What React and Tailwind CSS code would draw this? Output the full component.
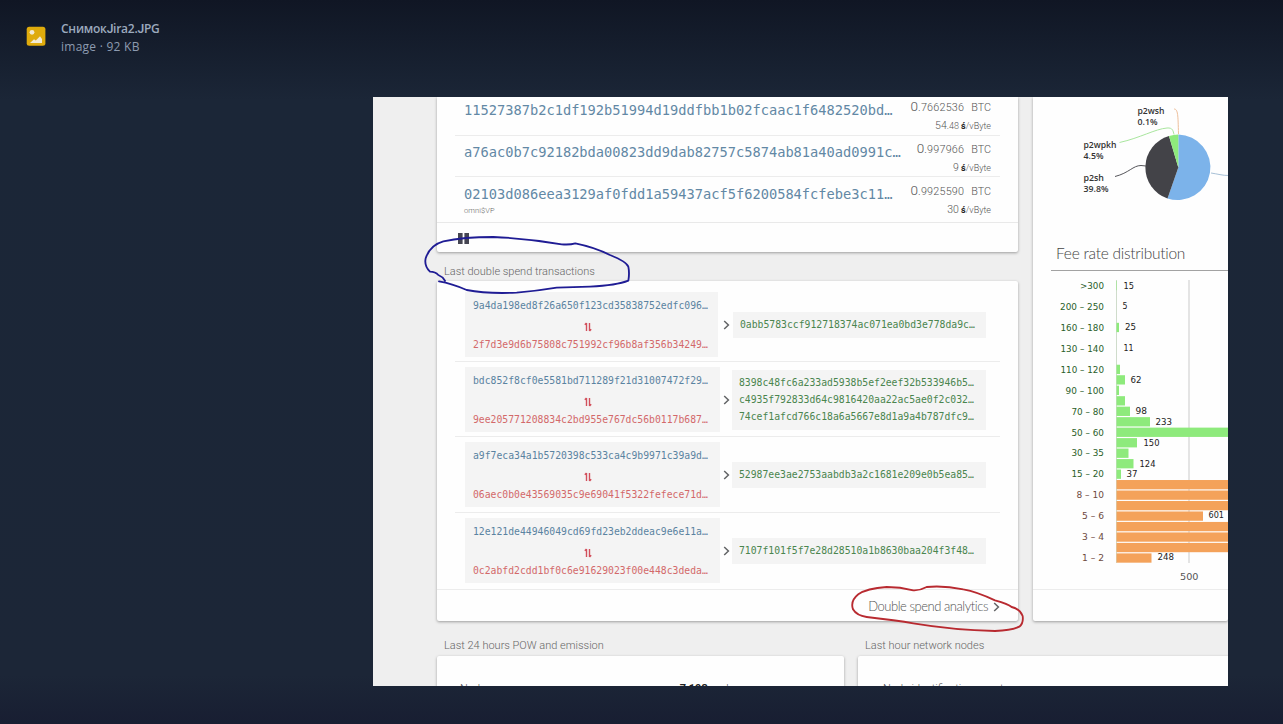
import React from "react";

const latest = [
  { hash: "11527387b2c1df192b51994d19ddfbb1b02fcaac1f6482520bd…", amount: ".7662536", fee: "54", cents: ".48", h: "h-[39px] pt-[4px]", line: "border-[#ececec]" },
  { hash: "a76ac0b7c92182bda00823dd9dab82757c5874ab81a40ad0991c…", amount: ".997966", fee: "9", cents: "", h: "h-[41px] pt-[7px]", line: "border-[#ececec]" },
  { hash: "02103d086eea3129af0fdd1a59437acf5f6200584fcfebe3c11…", note: "omni$VP", amount: ".9925590", fee: "30", cents: "", h: "h-[45px] pt-[8px]", line: "border-transparent" },
];

const doubles = [
  { a: "9a4da198ed8f26a650f123cd35838752edfc096…", b: "2f7d3e9d6b75808c751992cf96b8af356b34249…", out: ["0abb5783ccf912718374ac071ea0bd3e778da9c…"], row: "h-[81px] pt-[11px]", box: "w-[253px]", swap: "pr-[7px]", gap: "w-[15px] pl-[2px]", oh: "h-[26px]", ow: "w-[253px] pl-[7px]", line: "border-[#ececec]" },
  { a: "bdc852f8cf0e5581bd711289f21d31007472f29…", b: "9ee205771208834c2bd955e767dc56b0117b687…", out: ["8398c48fc6a233ad5938b5ef2eef32b533946b5…", "c4935f792833d64c9816420aa22ac5ae0f2c032…", "74cef1afcd766c18a6a5667e8d1a9a4b787dfc9…"], row: "h-[75px] pt-[5px]", box: "w-[255px]", swap: "pr-[9px]", gap: "w-[12px]", oh: "h-[60px]", ow: "w-[254px] pl-[7px]", line: "border-[#ececec]" },
  { a: "a9f7eca34a1b5720398c533ca4c9b9971c39a9d…", b: "06aec0b0e43569035c9e69041f5322fefece71d…", out: ["52987ee3ae2753aabdb3a2c1681e209e0b5ea85…"], row: "h-[76px] pt-[5px]", box: "w-[255px]", swap: "pr-[9px]", gap: "w-[12px]", oh: "h-[26px]", ow: "w-[254px] pl-[7px]", line: "border-[#ececec]" },
  { a: "12e121de44946049cd69fd23eb2ddeac9e6e11a…", b: "0c2abfd2cdd1bf0c6e91629023f00e448c3deda…", out: ["7107f101f5f7e28d28510a1b8630baa204f3f48…"], row: "h-[76px] pt-[5px]", box: "w-[255px]", swap: "pr-[9px]", gap: "w-[12px]", oh: "h-[26px]", ow: "w-[254px] pl-[7px]", line: "border-transparent" },
];

const GREEN = "#8eea7c";
const ORANGE = "#f4a25a";
// One entry per bar: right edge, value label, label x, label width
const bars = [
  [1117, "15", 1123.5, 10.5], [1116], [1116, "5", 1122.5, 5], [1116], [1119, "25", 1125, 11], [1116],
  [1116, "11", 1123.5, 10], [1116], [1120], [1125, "62", 1130.5, 11], [1119], [1125],
  [1130, "98", 1135.5, 11.5], [1150, "233", 1155.5, 16.5], [1240], [1137, "150", 1143.5, 16], [1128.5],
  [1133.5, "124", 1139.5, 16], [1121, "37", 1126.5, 11], [1240], [1240], [1240],
  [1203, "601", 1208.5, 15.5], [1240], [1240], [1240], [1151.5, "248", 1157.5, 16.5],
];
const ticks = [
  [">300", 1080], ["200 – 250", 1060], ["160 – 180", 1060.5], ["130 – 140", 1060.5], ["110 – 120", 1060.5],
  ["90 – 100", 1065.5], ["70 – 80", 1071.5], ["50 – 60", 1071.5], ["30 – 35", 1071.5], ["15 – 20", 1071.5],
  ["8 – 10", 1076.5], ["5 – 6", 1082], ["3 – 4", 1082], ["1 – 2", 1082],
];

const MONO = "font-['DejaVu_Sans_Mono',monospace] whitespace-nowrap";

function Chevron() {
  return (
    <svg width="7" height="10" viewBox="0 0 7 10" className="shrink-0">
      <path d="M1.2 1 L5.4 5 L1.2 9" fill="none" stroke="#626466" strokeWidth="1.5" />
    </svg>
  );
}

function Swap() {
  return (
    <svg width="8" height="10" viewBox="0 0 8 10">
      <path d="M2.5 9 V1 M0.8 2.8 L2.5 1 M5.5 1 V9 M7.2 7.2 L5.5 9" fill="none" stroke="#d2505c" strokeWidth="1.4" />
    </svg>
  );
}

function Card({ className, children }) {
  return <div className={`rounded-[2px] bg-[#fefefe] shadow-[0_1px_3px_rgba(0,0,0,0.35)] ${className}`}>{children}</div>;
}

function Latest() {
  return (
    <Card className="h-[155px] w-[581px] rounded-t-none">
      {latest.map((t) => (
        <div key={t.hash} className={`mr-[18px] ml-[18px] flex justify-between border-b pr-[9px] pl-[9px] ${t.h} ${t.line}`}>
          <div>
            <div className={`${MONO} text-[13.7px] leading-[19px] text-[#6288a5]`}>{t.hash}</div>
            {t.note && <div className="font-[Roboto,sans-serif] text-[7.5px] leading-[13px] font-light tracking-[0.1px] text-[#666]">{t.note}</div>}
          </div>
          <div className="-mt-[3px] text-right font-[Roboto,sans-serif] font-light whitespace-nowrap text-[#555]">
            <div className="text-[10.8px] leading-[16px]">
              <span className="text-[13.5px]">0</span>
              <span className="tracking-[0.2px]">{t.amount}</span>
              <span className="ml-[7px]">BTC</span>
            </div>
            <div className="mt-[2px] text-[9px] leading-[15px]">
              <span className="text-[10.5px]">{t.fee}</span>
              <span className="text-[9px]">{t.cents}</span> <span className="font-bold text-[#222]">ś</span>/vByte
            </div>
          </div>
        </div>
      ))}
      <div className="h-[30px] border-t border-[#e9e9e9] pt-[10px] pl-[21px]">
        <svg width="11" height="11" viewBox="0 0 11 11">
          <path d="M0 0h4.6v11H0z M6.4 0H11v11H6.4z" fill="#454552" />
        </svg>
      </div>
    </Card>
  );
}

function DoubleSpends() {
  return (
    <Card className="h-[340px] w-[581px]">
      {doubles.map((d) => (
        <div key={d.a} className={`mr-[18px] ml-[18px] flex items-start border-b pl-[10px] ${d.row} ${d.line}`}>
          <div className={`flex h-[65px] flex-col justify-between bg-[#f4f4f4] pt-[6px] pb-[5px] pl-[8px] ${d.box} ${MONO} text-[9.75px] leading-[15px]`}>
            <div className="text-[#5a83a1]">{d.a}</div>
            <div className={`flex h-[10px] justify-center ${d.swap}`}><span className="mt-[2px] -ml-[8px] block"><Swap /></span></div>
            <div className="text-[#d3696a]">{d.b}</div>
          </div>
          <div className="flex h-[65px] items-center">
            <div className={`flex justify-center ${d.gap}`}><Chevron /></div>
            <div className={`flex flex-col justify-center bg-[#f4f4f4] ${d.oh} ${d.ow} ${MONO} text-[9.75px] leading-[17px] text-[#4a854e]`}>
              {d.out.map((o) => <div key={o}>{o}</div>)}
            </div>
          </div>
        </div>
      ))}
      <div className="flex h-[32px] items-center justify-end border-t border-[#ececec] pt-[2px] pr-[18px]">
        <span className="mr-[5px] font-[Lato,sans-serif] text-[13px] font-light tracking-[-0.46px] text-[#555]">Double spend analytics</span>
        <Chevron />
      </div>
    </Card>
  );
}

function Pie() {
  return (
    <svg width="195" height="140" viewBox="1033 97 195 140" fontFamily="'Open Sans', sans-serif" fontSize="9" fontWeight="600" fill="#333">
      <path d="M1178.3 167.5 L1178.3 134.5 A32.8 32.8 0 1 1 1167.5 198.5 Z" fill="#7cb3ea" />
      <path d="M1178.3 167.5 L1167.5 198.5 A32.8 32.8 0 0 1 1169 136 Z" fill="#434348" />
      <path d="M1178.3 167.5 L1169 136 A32.8 32.8 0 0 1 1178.3 134.5 Z" fill="#8eea7c" />
      <g fill="none" strokeWidth="1">
        <path d="M1174 109 C1178 109 1178 115 1178.5 134" stroke="#eebf9b" />
        <path d="M1119.500 142.500 C1140 138 1155 129 1167 128 C1173 127.500 1173 131 1174 134.500" stroke="#a9e69e" />
        <path d="M1115 176.500 C1129 173 1133 165.500 1141 165.500 L1146 166" stroke="#55555a" />
        <path d="M1211 173 C1218 174 1222 175.500 1229 175.500" stroke="#a7c0d6" />
      </g>
      <text x="1137.500" y="114" textLength="27" lengthAdjust="spacingAndGlyphs">p2wsh</text>
      <text x="1137.500" y="125" textLength="20" lengthAdjust="spacingAndGlyphs">0.1%</text>
      <text x="1083.500" y="147.500" textLength="33" lengthAdjust="spacingAndGlyphs">p2wpkh</text>
      <text x="1083.500" y="158.500" textLength="20" lengthAdjust="spacingAndGlyphs">4.5%</text>
      <text x="1083.500" y="181" textLength="20.500" lengthAdjust="spacingAndGlyphs">p2sh</text>
      <text x="1083.500" y="191.500" textLength="25" lengthAdjust="spacingAndGlyphs">39.8%</text>
    </svg>
  );
}

function FeeChart() {
  return (
    <svg width="195" height="318" viewBox="1033 271 195 318" fontFamily="'DejaVu Sans', sans-serif" fontSize="8.700">
      <path d="M1189 280 V563" stroke="#d2d2d2" strokeWidth="1.2" />
      <path d="M1116.5 280 V563" stroke="#cfdccb" strokeWidth="1" />
      {bars.map((b, i) => {
        const y = 285.5 + 10.48 * i;
        return (
          <g key={i}>
            {b[0] > 1116 && <rect x="1116.500" y={y - 4.6} width={b[0] - 1116.5} height="9.300" fill={i > 18 ? ORANGE : GREEN} />}
            {b[1] === "601" && <rect x="1203" y={y - 4.6} width="25" height="9.300" fill="#fefefe" />}
            {b[1] && <text x={b[2]} y={y + (i > 21 ? 1.8 : i === 0 ? 3.8 : 3)} fill="#222" textLength={b[3]} lengthAdjust="spacingAndGlyphs">{b[1]}</text>}
          </g>
        );
      })}
      {ticks.map(([label, x], i) => (
        <text key={label} x={x} y={288.8 + 20.96 * i} fill={i > 9 ? "#6e4a3e" : "#2a5f2a"} textLength={1104 - x} lengthAdjust="spacingAndGlyphs">{label}</text>
      ))}
      <text x="1180" y="579.500" fill="#555" textLength="18.500" lengthAdjust="spacingAndGlyphs" fontSize="9.500">500</text>
    </svg>
  );
}

function SectionLabel({ className, children }) {
  return <div className={`font-[Roboto,sans-serif] text-[11px] font-light whitespace-nowrap text-[#666] ${className}`}>{children}</div>;
}

function Annotations() {
  return (
    <svg className="pointer-events-none absolute inset-0" width="855" height="589" viewBox="9 21 2565 1767" fill="none" strokeWidth="5.500" strokeLinejoin="round" strokeLinecap="round">
      <path stroke="#1f1c94" d="M225 572 Q218 560 205 555 Q196 545 180 545 Q162 528 167 505 Q180 465 220 454 Q280 441 370 441 Q470 445 575 463 Q600 465 616 460 Q675 472 720 495 Q770 515 775 530 Q779 550 775 572 Q740 586 660 590 L560 593 Q500 603 440 608 Q350 612 290 600 Q245 580 207 574" />
      <g transform="translate(990 1050)">
        <path stroke="#b82a30" d="M640 451 Q600 441 560 441 Q500 445 475 463 Q450 483 459 508 Q470 527 500 531 Q590 541 640 550 Q760 570 885 573 Q935 571 958 560 Q971 550 968 528 Q960 507 935 501 Q925 492 885 481 Q830 455 790 448 Q730 436 680 441 Q660 452 640 451Z" />
      </g>
    </svg>
  );
}

export default function App() {
  return (
    <div className="flex h-[724px] w-[1283px] flex-col overflow-hidden bg-[linear-gradient(to_bottom,#101624_0px,#1b2637_100px,#1c2637_675px,#181e32_724px)]">
      <header className="flex h-[97px] shrink-0 items-start pt-[20px] pl-[26px]">
        <svg width="20" height="20" viewBox="0 0 20 20" className="mt-[6px]">
          <rect x="0.700" y="0.700" width="18.700" height="19" rx="2.500" fill="#dfab0c" />
          <circle cx="6" cy="6.300" r="2.400" fill="#f3ead2" />
          <path d="M4 17 L8 13.300 L9.800 14.600 L14 10.300 L16 13 V17 Z" fill="#f3ead2" />
        </svg>
        <div className="ml-[15px] font-['Open_Sans',sans-serif] text-[12px] leading-[17px] text-[#9ba9bd]">
          <div className="font-semibold tracking-[-0.25px]">
            Снимок<span className="font-[Roboto,sans-serif]">J</span>ira2.<span className="font-[Roboto,sans-serif]">J</span>PG
          </div>
          <div className="tracking-[0.25px] text-[#8d9bb0]">image · 92 KB</div>
        </div>
      </header>
      <main className="relative ml-[373px] flex h-[589px] w-[855px] shrink-0 flex-col overflow-hidden bg-[#efefef]">
        <div className="flex h-[524px] shrink-0 gap-[15px] pl-[64px]">
          <div className="flex w-[581px] shrink-0 flex-col">
            <Latest />
            <SectionLabel className="flex h-[29px] items-center pt-[11px] pl-[7px]">Last double spend transactions</SectionLabel>
            <DoubleSpends />
          </div>
          <Card className="flex w-[195px] shrink-0 flex-col rounded-t-none">
            <Pie />
            <div className="ml-[18px] h-[34px] border-b border-[#a2a2a2] pl-[5px] font-[Lato,sans-serif] text-[15.5px] leading-[33px] font-light tracking-[-0.26px] whitespace-nowrap text-[#444]">Fee rate distribution</div>
            <FeeChart />
            <div className="h-[31px] border-t border-[#ececec]" />
          </Card>
        </div>
        <div className="flex shrink-0 gap-[14px] pl-[64px]">
          <div className="w-[407px] shrink-0">
            <SectionLabel className="flex h-[35px] items-center pt-[15px] pl-[7px]">Last 24 hours POW and emission</SectionLabel>
            <Card className="flex h-[60px] items-start justify-between pt-[25px] pr-[104px] pl-[23px] font-[Roboto,sans-serif] text-[11px] leading-[16px] font-light text-[#555]">
              <span>Nodes</span>
              <span><b className="font-bold text-[#222]">7 193</b> nodes</span>
            </Card>
          </div>
          <div className="w-[380px] shrink-0">
            <SectionLabel className="flex h-[35px] items-center pt-[15px] pl-[7px]">Last hour network nodes</SectionLabel>
            <Card className="h-[60px] pt-[25px] pl-[25px] font-[Roboto,sans-serif] text-[11px] leading-[16px] font-light text-[#555]">Node identification count</Card>
          </div>
        </div>
        <Annotations />
      </main>
    </div>
  );
}
